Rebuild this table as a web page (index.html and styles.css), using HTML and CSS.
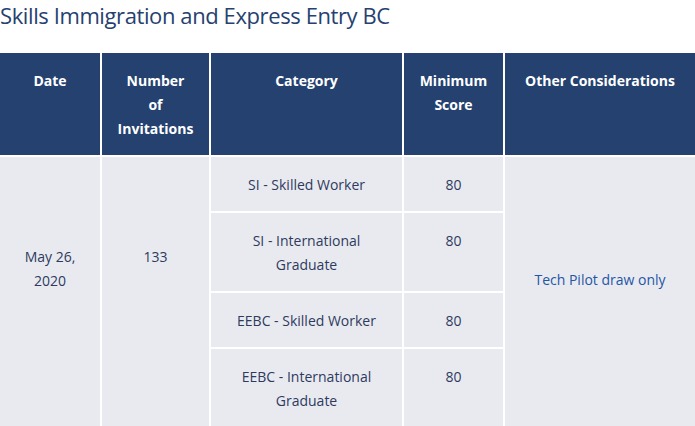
FILE: index.html
```html
<!DOCTYPE html>
<html>
<head>
<meta charset="utf-8">
<link rel="stylesheet" href="styles.css">
</head>
<body>
<h2 class="title">Skills Immigration and Express Entry BC</h2>
<div class="table">
  <div class="th">Date</div>
  <div class="th">Number<br>of<br>Invitations</div>
  <div class="th">Category</div>
  <div class="th">Minimum<br>Score</div>
  <div class="th">Other Considerations</div>

  <div class="td span date">May 26,<br>2020</div>
  <div class="td span count">133</div>
  <div class="td">SI - Skilled Worker</div>
  <div class="td">80</div>
  <div class="td span other"><span class="link">Tech Pilot draw only</span></div>

  <div class="td">SI - International<br>Graduate</div>
  <div class="td">80</div>

  <div class="td">EEBC - Skilled Worker</div>
  <div class="td">80</div>

  <div class="td">EEBC - International<br>Graduate</div>
  <div class="td">80</div>
</div>
</body>
</html>
```

FILE: styles.css
```css
html, body {
  margin: 0;
  padding: 0;
  background: #ffffff;
}
body {
  font-family: "Open Sans", "Noto Sans", sans-serif;
  overflow: hidden;
}
.title {
  margin: 0;
  height: 53px;
  font-size: 22px;
  font-weight: 400;
  line-height: 31px;
  color: #26416f;
  letter-spacing: -0.4px;
}
.table {
  display: grid;
  grid-template-columns: 100px 107px 191px 99px 190px;
  gap: 2px;
  background: #ffffff;
  font-size: 14px;
  line-height: 24px;
}
.th {
  background: #24416f;
  color: #ffffff;
  font-weight: 700;
  text-align: center;
  padding: 16px 6px 14px;
}
.td {
  background: #e9eaef;
  color: #2e3a60;
  text-align: center;
  padding: 16px 6px 14px;
}
.span {
  grid-row: span 4;
}
.date, .count {
  padding-top: 88px;
}
.other {
  padding-top: 111px;
}
.link {
  color: #2356a6;
}
```
